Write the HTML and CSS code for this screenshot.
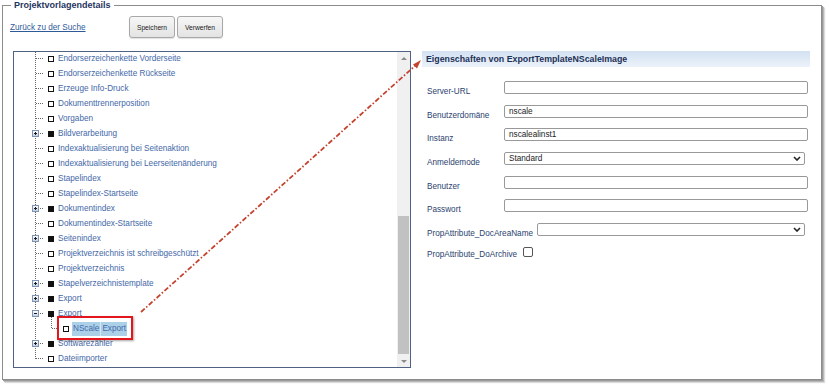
FILE: index.html
```html
<!DOCTYPE html>
<html lang="de">
<head>
    <meta charset="UTF-8">
    <title>Projektvorlagendetails</title>
    <link rel="stylesheet" href="styles.css">
</head>
<body>
<div class="page">
    <fieldset class="details">
        <legend>Projektvorlagendetails</legend>

        <div class="toolbar">
            <a href="#" class="back">Zurück zu der Suche</a>
            <button class="btn">Speichern</button>
            <button class="btn">Verwerfen</button>
        </div>

        <div class="main">
            <div class="tree-panel">
                <div class="tree">
                    <div class="node"><span class="exp"></span><span class="ico"></span><a>Endorserzeichenkette Vorderseite</a></div>
                    <div class="node"><span class="exp"></span><span class="ico"></span><a>Endorserzeichenkette Rückseite</a></div>
                    <div class="node"><span class="exp"></span><span class="ico"></span><a>Erzeuge Info-Druck</a></div>
                    <div class="node"><span class="exp"></span><span class="ico"></span><a>Dokumenttrennerposition</a></div>
                    <div class="node"><span class="exp"></span><span class="ico"></span><a>Vorgaben</a></div>
                    <div class="node"><span class="exp"><i class="box plus"></i></span><span class="ico full"></span><a>Bildverarbeitung</a></div>
                    <div class="node"><span class="exp"></span><span class="ico"></span><a>Indexaktualisierung bei Seitenaktion</a></div>
                    <div class="node"><span class="exp"></span><span class="ico"></span><a>Indexaktualisierung bei Leerseitenänderung</a></div>
                    <div class="node"><span class="exp"></span><span class="ico"></span><a>Stapelindex</a></div>
                    <div class="node"><span class="exp"></span><span class="ico"></span><a>Stapelindex-Startseite</a></div>
                    <div class="node"><span class="exp"><i class="box plus"></i></span><span class="ico full"></span><a>Dokumentindex</a></div>
                    <div class="node"><span class="exp"></span><span class="ico"></span><a>Dokumentindex-Startseite</a></div>
                    <div class="node"><span class="exp"><i class="box plus"></i></span><span class="ico full"></span><a>Seitenindex</a></div>
                    <div class="node"><span class="exp"></span><span class="ico"></span><a>Projektverzeichnis ist schreibgeschützt</a></div>
                    <div class="node"><span class="exp"></span><span class="ico"></span><a>Projektverzeichnis</a></div>
                    <div class="node"><span class="exp"><i class="box plus"></i></span><span class="ico full"></span><a>Stapelverzeichnistemplate</a></div>
                    <div class="node"><span class="exp"><i class="box plus"></i></span><span class="ico full"></span><a>Export</a></div>
                    <div class="node"><span class="exp"><i class="box minus"></i></span><span class="ico full"></span><a>Export</a></div>
                    <div class="node child"><span class="exp"></span><span class="ico"></span><a class="selected"><span>NScale</span><span>Export</span></a></div>
                    <div class="node"><span class="exp"><i class="box plus"></i></span><span class="ico full"></span><a>Softwarezähler</a></div>
                    <div class="node last"><span class="exp"></span><span class="ico"></span><a>Dateiimporter</a></div>
                </div>
                <div class="scrollbar">
                    <span class="arrow up"></span>
                    <span class="thumb"></span>
                    <span class="arrow down"></span>
                </div>
            </div>

            <div class="props">
                <div class="props-head">Eigenschaften von ExportTemplateNScaleImage</div>
                <div class="form">
                    <div class="field"><label>Server-URL</label><input type="text" value=""></div>
                    <div class="field"><label>Benutzerdomäne</label><input type="text" value="nscale"></div>
                    <div class="field"><label>Instanz</label><input type="text" value="nscalealinst1"></div>
                    <div class="field"><label>Anmeldemode</label>
                        <div class="select">
                            <select><option>Standard</option></select>
                            <svg class="chev" width="8" height="5" viewBox="0 0 8 5"><polyline points="1,1 4,4 7,1" fill="none" stroke="#222" stroke-width="1.6"/></svg>
                        </div>
                    </div>
                    <div class="field"><label>Benutzer</label><input type="text" value=""></div>
                    <div class="field"><label>Passwort</label><input type="password" value=""></div>
                    <div class="field wide"><label>PropAttribute_DocAreaName</label>
                        <div class="select short">
                            <select><option></option></select>
                            <svg class="chev" width="8" height="5" viewBox="0 0 8 5"><polyline points="1,1 4,4 7,1" fill="none" stroke="#222" stroke-width="1.6"/></svg>
                        </div>
                    </div>
                    <div class="field wide check"><label>PropAttribute_DoArchive</label><input type="checkbox"></div>
                </div>
            </div>
        </div>
    </fieldset>

    <div class="callout"></div>
    <svg class="pointer" width="829" height="387" viewBox="0 0 829 387">
        <line x1="141" y1="312" x2="417" y2="64" stroke="#c4432f" stroke-width="1.8" stroke-dasharray="5 2 1.5 2"/>
        <polygon points="421,60 413,64.5 417,68.5" fill="#c4432f"/>
    </svg>
</div>
</body>
</html>
```

FILE: styles.css
```css
body {
    margin: 0;
    background: #ffffff;
    font-family: "Liberation Sans", Arial, sans-serif;
    font-size: 8.2px;
    color: #2b3f6e;
}

.page {
    position: relative;
    width: 829px;
    height: 387px;
    padding-left: 2px;
    box-sizing: border-box;
}

.details {
    margin: 0;
    padding: 0;
    width: 820px;
    height: 380px;
    box-sizing: border-box;
    border: 1px solid #8c8c8c;
    box-shadow: 1px 1px 0 #9a9a9a, 2px 2px 1px #b8b8b8, 3px 3px 1px #e2e2e2;
}

legend {
    margin-left: 8px;
    padding: 0 3px;
    font-size: 9px;
    line-height: 10px;
    font-weight: bold;
    color: #1f3560;
}

.toolbar {
    display: flex;
    align-items: center;
    height: 22px;
    margin: 6px 0 0 7px;
}

.back {
    width: 119px;
    color: #2f5a98;
    text-decoration: underline;
}

.btn {
    width: 46px;
    height: 22px;
    padding: 0;
    margin-right: 2px;
    border: 1px solid #a8a8a8;
    border-radius: 3px;
    background: linear-gradient(#f7f7f7, #e3e3e3);
    box-shadow: 0 1px 1px rgba(0, 0, 0, 0.12);
    font-family: "Liberation Sans", Arial, sans-serif;
    font-size: 6.7px;
    color: #222;
}

.main {
    display: flex;
    margin: 13px 0 0 10px;
}

/* tree */

.tree-panel {
    display: flex;
    width: 398px;
    height: 317px;
    box-sizing: border-box;
    border: 1px solid #4f6286;
    overflow: hidden;
}

.tree {
    position: relative;
    flex: 1;
    margin-top: -1px;
}

.tree::before {
    content: "";
    position: absolute;
    left: 21px;
    top: 1px;
    height: 307px;
    border-left: 1px dotted #666;
}

.node {
    display: flex;
    align-items: center;
    height: 15px;
    padding-left: 18px;
    white-space: nowrap;
}

.node.child {
    padding-left: 33px;
}

.exp {
    position: relative;
    flex: none;
    width: 12px;
    height: 15px;
}

.exp::after {
    content: "";
    position: absolute;
    left: 4px;
    right: 1px;
    top: 7px;
    border-top: 1px dotted #666;
}

.child .exp::before {
    content: "";
    position: absolute;
    left: 4px;
    top: -4px;
    height: 11px;
    border-left: 1px dotted #666;
}

.child .exp::after {
    left: 5px;
    right: 2px;
}

.box {
    position: absolute;
    z-index: 1;
    left: 0;
    top: 4px;
    width: 7px;
    height: 7px;
    box-sizing: border-box;
    border: 1px solid #7f93b3;
    background: linear-gradient(#ffffff, #c6d2e3);
}

.box::before {
    content: "";
    position: absolute;
    left: 1px;
    top: 2px;
    width: 3px;
    height: 1px;
    background: #1a1a1a;
}

.plus::after {
    content: "";
    position: absolute;
    left: 2px;
    top: 1px;
    width: 1px;
    height: 3px;
    background: #1a1a1a;
}

.ico {
    flex: none;
    width: 6px;
    height: 6px;
    margin: 0 4px;
    box-sizing: border-box;
    border: 1px solid #111;
    background: #fff;
}

.ico.full {
    background: #111;
}

.node a {
    color: #4468a8;
    line-height: 15px;
}

.selected {
    display: flex;
    margin-left: -1px;
}

.selected span {
    padding: 0 1px;
    line-height: 14px;
    background: #acd0e8;
}

.selected span + span {
    border-left: 1px solid #d6e8f4;
}

.scrollbar {
    display: flex;
    flex-direction: column;
    align-items: center;
    flex: none;
    width: 13px;
    background: #f0f0f0;
}

.arrow {
    width: 0;
    height: 0;
    border-left: 3px solid transparent;
    border-right: 3px solid transparent;
}

.arrow.up {
    margin-top: 5px;
    border-bottom: 3px solid #8a8a8a;
}

.arrow.down {
    margin-top: 6px;
    border-top: 3px solid #8a8a8a;
}

.thumb {
    width: 11px;
    height: 138px;
    margin-top: 156px;
    background: #c1c1c1;
}

/* properties */

.props {
    width: 388px;
    margin-left: 11px;
}

.props-head {
    height: 16px;
    padding-left: 4px;
    background: linear-gradient(#d3e1f2, #ebf2fa);
    font-size: 8.8px;
    font-weight: bold;
    line-height: 17px;
    color: #1c3157;
}

.form {
    display: grid;
    grid-auto-rows: 13px;
    row-gap: 10.7px;
    margin-top: 14px;
    padding-left: 5px;
}

.field {
    display: flex;
    align-items: flex-start;
}

.field label {
    flex: none;
    width: 77px;
    padding-top: 5px;
    line-height: 11px;
    white-space: nowrap;
}

.field.wide label {
    width: auto;
    margin-right: 4px;
}

.field.check label {
    padding-top: 2px;
    margin-right: 6px;
}

.field input[type="text"],
.field input[type="password"] {
    width: 304px;
    height: 13px;
    margin: 0;
    padding: 0 4px;
    box-sizing: border-box;
    border: 1px solid #999;
    border-radius: 2px;
    font-family: "Liberation Sans", Arial, sans-serif;
    font-size: 8.2px;
    color: #222;
}

.select {
    position: relative;
    width: 301px;
    height: 13px;
}

.select.short {
    width: 268px;
}

.select select {
    -webkit-appearance: none;
    appearance: none;
    width: 100%;
    height: 13px;
    margin: 0;
    padding: 0 4px;
    box-sizing: border-box;
    border: 1px solid #999;
    border-radius: 2px;
    background: #fff;
    font-family: "Liberation Sans", Arial, sans-serif;
    font-size: 8.2px;
    line-height: 11px;
    color: #222;
}

.chev {
    position: absolute;
    right: 4px;
    top: 4px;
}

.field input[type="checkbox"] {
    -webkit-appearance: none;
    appearance: none;
    width: 10px;
    height: 10px;
    margin: 0;
    border: 1px solid #555;
    border-radius: 2px;
    background: #fff;
}

/* annotation */

.callout {
    position: absolute;
    left: 57px;
    top: 316px;
    width: 76px;
    height: 24px;
    box-sizing: border-box;
    border: 2px solid #e3161d;
    box-shadow: 1px 1px 2px rgba(0, 0, 0, 0.35);
}

.pointer {
    position: absolute;
    left: 0;
    top: 0;
    pointer-events: none;
}
```
